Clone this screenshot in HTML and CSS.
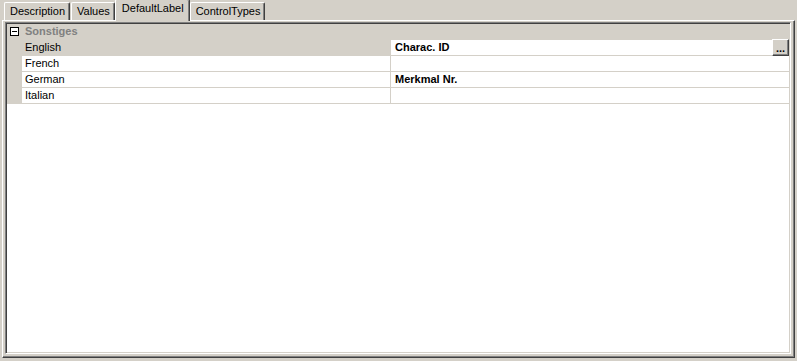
FILE: index.html
```html
<!DOCTYPE html>
<html>
<head>
<meta charset="utf-8">
<link rel="stylesheet" href="styles.css">
</head>
<body>
<div class="win">
  <div class="tabs">
    <div class="tab">Description</div>
    <div class="tab">Values</div>
    <div class="tab active">DefaultLabel</div>
    <div class="tab">ControlTypes</div>
  </div>
  <div class="page">
    <div class="grid">
      <div class="cat">
        <div class="margin"><span class="box"><span class="minus"></span></span></div>
        <div class="cattext">Sonstiges</div>
      </div>
      <div class="row sel">
        <div class="margin"></div>
        <div class="label">English</div>
        <div class="value bold">Charac. ID<span class="ell">...</span></div>
      </div>
      <div class="row">
        <div class="margin"></div>
        <div class="label">French</div>
        <div class="value"></div>
      </div>
      <div class="row">
        <div class="margin"></div>
        <div class="label">German</div>
        <div class="value bold">Merkmal Nr.</div>
      </div>
      <div class="row">
        <div class="margin"></div>
        <div class="label">Italian</div>
        <div class="value"></div>
      </div>
    </div>
  </div>
</div>
</body>
</html>
```
FILE: styles.css
```css
html, body { margin: 0; padding: 0; }
body {
  background: #d4d0c8;
  font-family: "Liberation Sans", Arial, sans-serif;
  font-size: 11px;
  color: #000;
  width: 797px;
  height: 361px;
  overflow: hidden;
}
.win { display: flex; flex-direction: column; height: 358px; padding: 0 2px 0 2px; }
.tabs { display: flex; align-items: flex-end; height: 20px; padding-left: 2px; position: relative; z-index: 2; }
.tab {
  height: 17px;
  line-height: 17px;
  padding: 0 4px 0 5px;
  border-top: 1px solid #fff;
  border-left: 1px solid #fff;
  border-right: 1px solid #404040;
  box-shadow: inset -1px 0 0 #808080;
  border-radius: 2px 2px 0 0;
  margin-right: 1px;
}
.tab.active {
  height: 19px;
  line-height: 17px;
  margin: 0 -1px 0 -1px;
  padding: 0 5px 2px 6px;
  background: #d4d0c8;
  position: relative;
  top: 1px;
}
.tab.active + .tab { margin-left: 1px; }
.page {
  flex: 1;
  border-top: 1px solid #fff;
  border-left: 1px solid #fff;
  border-right: 1px solid #404040;
  border-bottom: 1px solid #404040;
  box-shadow: inset -1px -1px 0 #808080;
  padding: 1px 3px 3px 2px;
  display: flex;
}
.grid {
  flex: 1;
  background: #fff;
  border-top: 1px solid #808080;
  border-left: 1px solid #808080;
  border-right: 1px solid #fff;
  border-bottom: 1px solid #fff;
  box-shadow: inset 1px 1px 0 #404040, inset -1px -1px 0 #d4d0c8;
  padding: 1px 1px 1px 1px;
  display: flex;
  flex-direction: column;
}
.cat, .row { display: flex; height: 16px; }
.cat { background: #d4d0c8; }
.margin { width: 15px; flex: none; background: #d4d0c8; position: relative; }
.box {
  position: absolute;
  left: 3px; top: 3px;
  width: 7px; height: 7px;
  border: 1px solid #000;
  background: #fff;
}
.minus {
  position: absolute;
  left: 1px; top: 3px;
  width: 5px; height: 1px;
  background: #000;
}
.cattext { font-weight: bold; color: #808080; padding-left: 3px; line-height: 15px; }
.label {
  width: 369px;
  flex: none;
  padding-left: 3px;
  line-height: 15px;
  border-bottom: 1px solid #d4d0c8;
  border-right: 1px solid #d4d0c8;
  box-sizing: border-box;
  height: 16px;
  background: #fff;
}
.sel .label { background: #d4d0c8; }
.value {
  flex: 1;
  padding-left: 4px;
  line-height: 15px;
  border-bottom: 1px solid #d4d0c8;
  box-sizing: border-box;
  height: 16px;
  position: relative;
}
.bold { font-weight: bold; }
.ell {
  position: absolute;
  right: 0; top: -1px;
  width: 15px; height: 15px;
  background: #d4d0c8;
  border-top: 1px solid #fff;
  border-left: 1px solid #fff;
  border-right: 1px solid #404040;
  border-bottom: 1px solid #404040;
  box-shadow: inset -1px -1px 0 #808080;
  font-weight: bold;
  font-size: 11px;
  line-height: 17px;
  text-align: center;
}
```
